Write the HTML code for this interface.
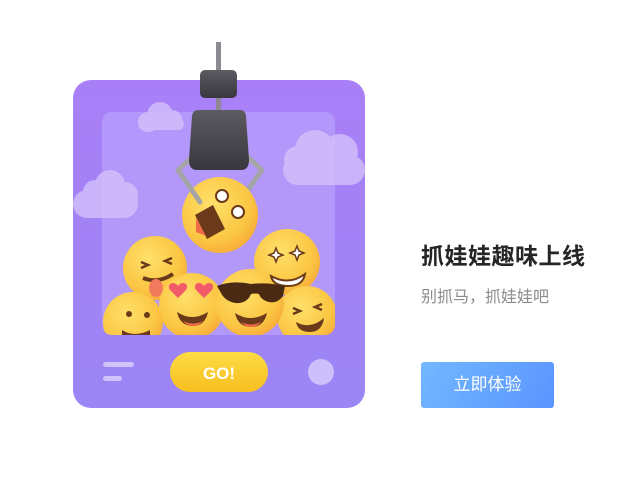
<!DOCTYPE html>
<html><head><meta charset="utf-8"><style>
*{margin:0;padding:0;box-sizing:border-box}
body{width:640px;height:480px;background:#fff;position:relative;overflow:hidden;font-family:"Liberation Sans","Noto Sans CJK SC",sans-serif}
.t{position:absolute;left:421px;top:237px;font-size:23px;font-weight:bold;color:#262626;letter-spacing:0.5px}
.s{position:absolute;left:421px;top:283px;font-size:16px;color:#8a8a8f}
.b{position:absolute;left:421px;top:362px;width:133px;height:46px;border-radius:3px;background:linear-gradient(120deg,#72b8ff,#5a94ff);color:#fff;font-size:17px;text-align:center;line-height:46px}
</style></head><body>
<svg width="640" height="480" style="position:absolute;left:0;top:0">
<defs>
<linearGradient id="card" x1="0" y1="0" x2="0" y2="1"><stop offset="0" stop-color="#a97ff7"/><stop offset="1" stop-color="#9b86f5"/></linearGradient>
<linearGradient id="go" x1="0" y1="0" x2="0" y2="1"><stop offset="0" stop-color="#fddc45"/><stop offset="1" stop-color="#f7bf1f"/></linearGradient>
<radialGradient id="em" cx="0.4" cy="0.35" r="0.7"><stop offset="0" stop-color="#ffe06a"/><stop offset="0.7" stop-color="#fbc643"/><stop offset="1" stop-color="#f6a93a"/></radialGradient>
<linearGradient id="cl" x1="0" y1="0" x2="0" y2="1"><stop offset="0" stop-color="#5d5b62"/><stop offset="1" stop-color="#39373d"/></linearGradient>
<clipPath id="pc"><rect x="102" y="112" width="233" height="223" rx="10"/></clipPath>
</defs>
<rect x="73" y="80" width="292" height="328" rx="18" fill="url(#card)"/>
<rect x="102" y="112" width="233" height="223" rx="10" fill="#b9a1fb" opacity="0.7"/>
<g fill="#d6c4fb" opacity="0.75">
<circle cx="160" cy="115" r="13"/><circle cx="148" cy="122" r="10"/><circle cx="172" cy="120" r="10"/><rect x="138" y="118" width="46" height="12" rx="6"/>
<circle cx="315" cy="150" r="20"/><circle cx="340" cy="152" r="18"/><circle cx="298" cy="160" r="14"/><rect x="283" y="155" width="82" height="30" rx="15"/>
<circle cx="110" cy="185" r="15"/><circle cx="95" cy="192" r="12"/><circle cx="125" cy="195" r="13"/><rect x="73" y="190" width="65" height="28" rx="14"/>
</g>
<g clip-path="url(#pc)">
<circle cx="155" cy="268" r="32" fill="url(#em)"/>
<circle cx="287" cy="262" r="33" fill="url(#em)"/>
<circle cx="133" cy="322" r="30" fill="url(#em)"/>
<circle cx="307" cy="316" r="30" fill="url(#em)"/>
<circle cx="192" cy="306" r="33" fill="url(#em)"/>
<circle cx="250" cy="303" r="34" fill="url(#em)"/>
<path d="M141 262l7 3-7 3M172 258l-7 3 7 3" stroke="#6b3a1a" stroke-width="2.5" fill="none"/>
<path d="M143 278q15 6 30-4" stroke="#6b3a1a" stroke-width="4" fill="none"/><ellipse cx="156" cy="288" rx="7" ry="9" fill="#f27a5c"/>
<path d="M271 276q18 10 34-2q-2 12-17 12q-15 0-17-10z" fill="#fff" stroke="#6b3a1a" stroke-width="2"/>
<path d="M276 248l2 5 5 2-5 2-2 5-2-5-5-2 5-2zM297 246l2 5 5 2-5 2-2 5-2-5-5-2 5-2z" fill="#fff" stroke="#6b3a1a" stroke-width="1.5"/>
<circle cx="129" cy="314" r="3" fill="#6b3a1a"/><circle cx="147" cy="315" r="3" fill="#6b3a1a"/><path d="M122 330q12 8 28 0v10h-28z" fill="#6b3a1a"/>
<path d="M170 290c-4-6 4-10 8-4c4-6 12-2 8 4l-8 8z" fill="#f25a6a"/><path d="M196 290c-4-6 4-10 8-4c4-6 12-2 8 4l-8 8z" fill="#f25a6a"/>
<path d="M177 312q15 10 31 0q-3 14-15 14q-13 0-16-14z" fill="#6b3a1a"/><path d="M183 321q10 5 20 0q-4 5-10 5q-6 0-10-5z" fill="#f26a4a"/>
<path d="M217 286q16-6 34-2q16-2 34 2l-2 10q-6 8-14 6q-8-2-10-8q-4-1-8 0q-4 10-16 9q-10-2-14-10z" fill="#4a2a12"/>
<path d="M235 313q15 10 32 0q-3 14-16 14q-13 0-16-14z" fill="#6b3a1a"/><path d="M241 322q10 5 20 0q-4 5-10 5q-6 0-10-5z" fill="#f26a4a"/>
<path d="M293 308l7 3-7 3M322 304l-7 3 7 3" stroke="#6b3a1a" stroke-width="2.5" fill="none"/>
<path d="M296 322q14 8 28-4q-2 14-14 14q-12 0-14-10z" fill="#6b3a1a"/>
</g>
<rect x="216" y="42" width="5" height="75" fill="#8c8a90"/>
<rect x="200" y="70" width="37" height="28" rx="5" fill="url(#cl)"/>
<path d="M178 170l22-20M262 170l-22-20M178 170l22 32M262 170l-20 28" stroke="#a5a5a8" stroke-width="5" fill="none" stroke-linecap="round"/>
<circle cx="220" cy="215" r="38" fill="url(#em)"/>
<path d="M195 215l18-10 12 24-18 10z" fill="#6b3a1a"/><path d="M196 218l10 18-10-4z" fill="#f26a4a"/>
<circle cx="222" cy="196" r="6" fill="#fff" stroke="#6b3a1a" stroke-width="2"/><circle cx="238" cy="212" r="6" fill="#fff" stroke="#6b3a1a" stroke-width="2"/>
<path d="M178 170l22 32" stroke="#a5a5a8" stroke-width="5" stroke-linecap="round"/>
<path d="M198 110h42q5 0 6 6l3 44q0 10-8 10h-44q-8 0-8-10l3-44q1-6 6-6z" fill="url(#cl)"/>
<rect x="103" y="362" width="31" height="5" rx="2.5" fill="#d0c2fb"/>
<rect x="103" y="376" width="19" height="5" rx="2.5" fill="#d0c2fb"/>
<rect x="170" y="352" width="98" height="40" rx="20" fill="url(#go)"/>
<text x="219" y="379" font-size="17" fill="#fff" text-anchor="middle" font-family="Liberation Sans" font-weight="bold">GO!</text>
<circle cx="321" cy="372" r="13" fill="#cdbffb"/>
</svg>
<div class="t">抓娃娃趣味上线</div>
<div class="s">别抓马，抓娃娃吧</div>
<div class="b">立即体验</div>
</body></html>
